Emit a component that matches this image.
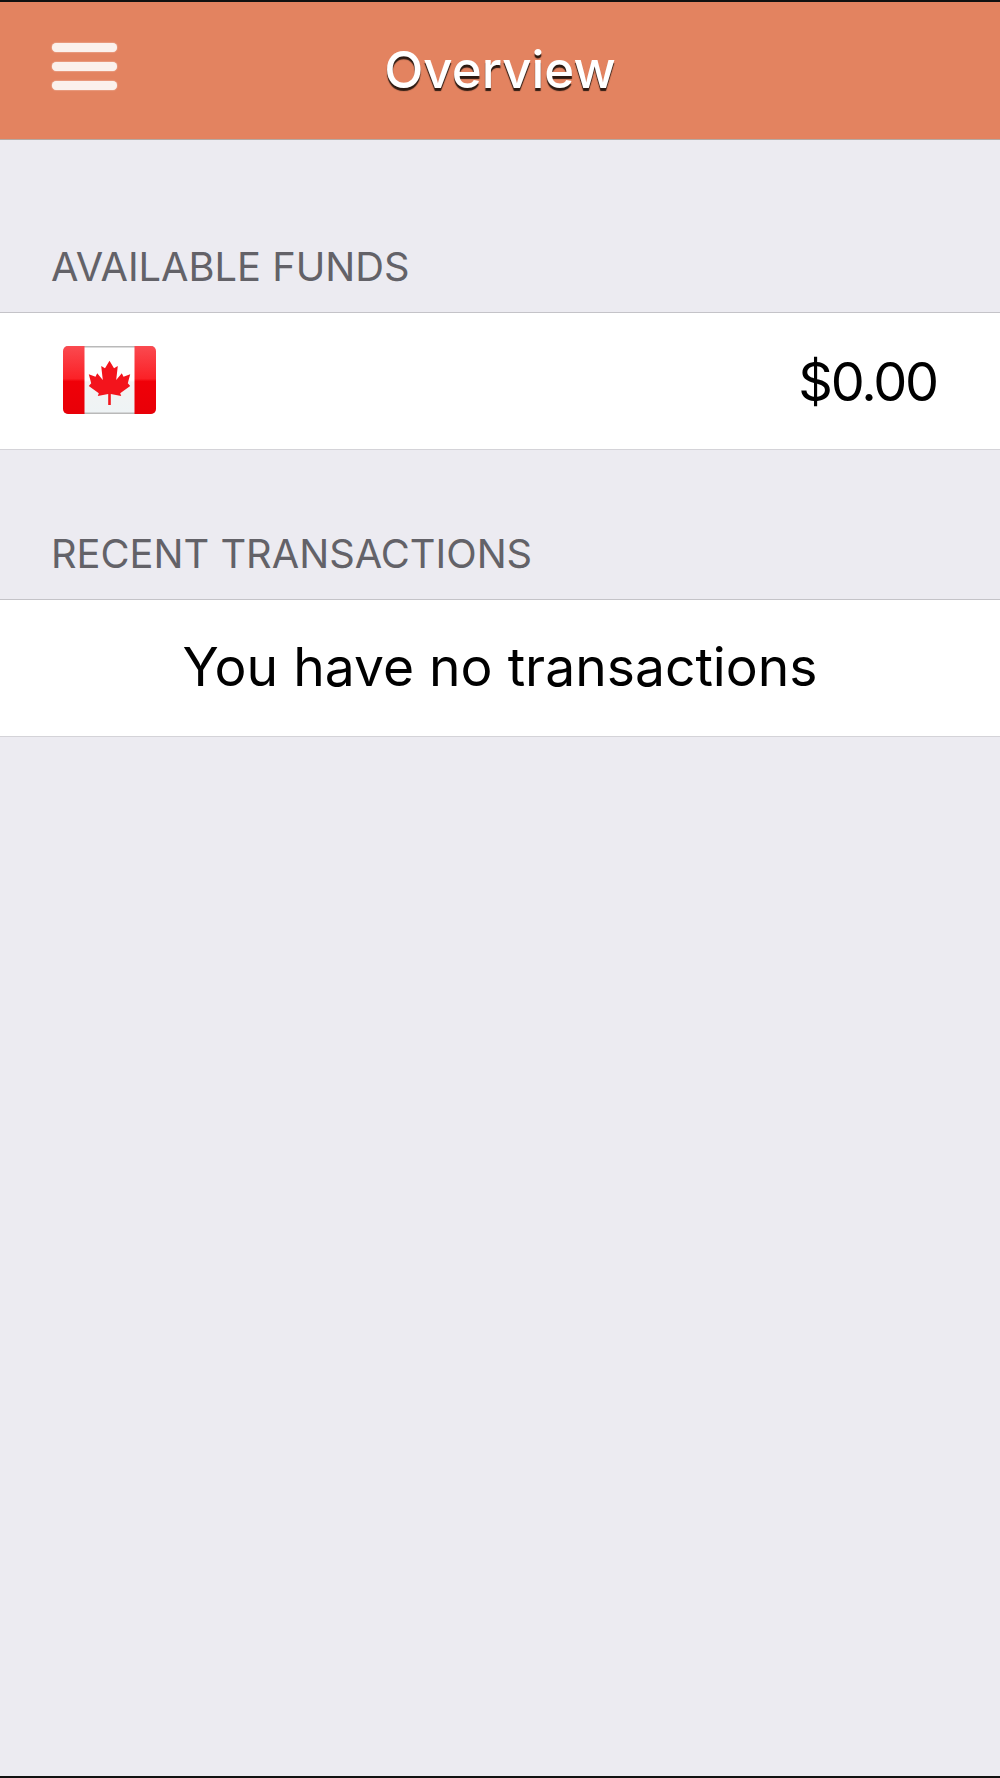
<script>
  const sections = [
    { id: 'funds', title: 'AVAILABLE FUNDS' },
    { id: 'recent', title: 'RECENT TRANSACTIONS' }
  ];
</script>

<div class="screen">
  <header class="topbar">
    <button class="menu" aria-label="Menu">
      <span></span>
      <span></span>
      <span></span>
    </button>
    <h1>Overview</h1>
  </header>

  <main>
    <h2>{sections[0].title}</h2>
    <div class="row funds">
      <svg class="flag" viewBox="0 0 93 68" width="93" height="68" aria-label="Canada">
        <defs>
          <linearGradient id="red" x1="0" y1="0" x2="0" y2="1">
            <stop offset="0" stop-color="#fa4a50" />
            <stop offset="0.48" stop-color="#fb2127" />
            <stop offset="0.52" stop-color="#f00008" />
            <stop offset="1" stop-color="#e80008" />
          </linearGradient>
          <linearGradient id="white" x1="0" y1="0" x2="0" y2="1">
            <stop offset="0" stop-color="#ffffff" />
            <stop offset="0.5" stop-color="#ffffff" />
            <stop offset="0.53" stop-color="#f3f3f3" />
            <stop offset="1" stop-color="#eef3f5" />
          </linearGradient>
          <clipPath id="corners"><rect width="93" height="68" rx="5" /></clipPath>
        </defs>
        <g clip-path="url(#corners)">
          <rect width="93" height="68" fill="url(#white)" />
          <rect width="93" height="1.5" fill="#b9b9b9" />
          <rect y="66.5" width="93" height="1.500" fill="#b9b9b9" />
          <rect width="21.500" height="68" fill="url(#red)" />
          <rect x="71.500" width="21.500" height="68" fill="url(#red)" />
        </g>
        <path
          d="M46.500 14.700L51 22.300 54.800 20 53.200 34 58.800 27.300 60.500 30.700 67.200 28.300 64.800 37.300 67.200 40 57.200 47.300 58.200 50 47.800 48V59H45.200V48L34.800 50 35.800 47.300 25.800 40 28.200 37.300 25.800 28.300 32.500 30.700 34.200 27.300 39.800 34 38.200 20 42 22.300Z"
          fill="#f3141c"
        />
      </svg>
      <span class="amount">$0.00</span>
    </div>

    <h2>{sections[1].title}</h2>
    <div class="row empty">You have no transactions</div>
  </main>
</div>

<style>
  :global(body) {
    margin: 0;
    background: #ecebf1;
  }

  .screen {
    height: 1778px;
    box-sizing: border-box;
    border-top: 2px solid #111;
    border-bottom: 2px solid #111;
    background: #ecebf1;
    font-family: Inter, "Liberation Sans", sans-serif;
    overflow: hidden;
  }

  .topbar {
    position: relative;
    height: 138px;
    box-sizing: border-box;
    border-bottom: 1px solid #b5a9a2;
    background: #e38360;
    display: flex;
    align-items: center;
    justify-content: center;
  }

  .menu {
    position: absolute;
    left: 52px;
    top: 41px;
    width: 65px;
    padding: 0;
    border: 0;
    background: none;
    display: flex;
    flex-direction: column;
    gap: 10px;
  }

  .menu span {
    display: block;
    height: 9px;
    border-radius: 4.5px;
    background: #fbf1ec;
    box-shadow: 0 0 1.500px #fbf1ec;
  }

  h1 {
    margin: 0 0 2px;
    font-size: 51px;
    font-weight: 500;
    color: #fff;
    text-shadow: 0 3px 1px #2c1a12;
  }

  main {
    padding-top: 23px;
  }

  h2 {
    margin: 0;
    padding: 0 0 21px 51px;
    height: 150px;
    box-sizing: border-box;
    display: flex;
    align-items: flex-end;
    font-size: 39.800px;
    font-weight: 400;
    line-height: 48px;
    color: #636268;
    border-bottom: 1px solid #c4c3c8;
  }

  .row {
    height: 137px;
    box-sizing: border-box;
    background: #fff;
    border-bottom: 1px solid #d4d3d8;
    color: #000;
    font-size: 53.400px;
  }

  .funds {
    display: flex;
    align-items: center;
    justify-content: space-between;
    padding: 0 63px 2px;
  }

  .amount {
    font-size: 54px;
    letter-spacing: -2.200px;
    margin-top: 2px;
  }

  .empty {
    display: flex;
    align-items: center;
    justify-content: center;
    padding-bottom: 4px;
  }
</style>
